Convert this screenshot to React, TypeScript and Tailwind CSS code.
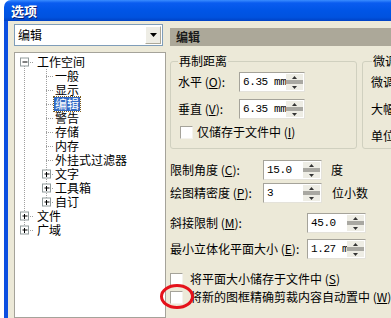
import React from "react";

type TreeRow = { label: string; level: 0 | 1; expander?: "plus" | "minus"; selected?: boolean };

const treeRows: TreeRow[] = [
  { label: "工作空间", level: 0, expander: "minus" },
  { label: "一般", level: 1 },
  { label: "显示", level: 1 },
  { label: "编辑", level: 1, selected: true },
  { label: "警告", level: 1 },
  { label: "存储", level: 1 },
  { label: "内存", level: 1 },
  { label: "外挂式过滤器", level: 1 },
  { label: "文字", level: 1, expander: "plus" },
  { label: "工具箱", level: 1, expander: "plus" },
  { label: "自订", level: 1, expander: "plus" },
  { label: "文件", level: 0, expander: "plus" },
  { label: "广域", level: 0, expander: "plus" },
];

function Mnemonic({ text, k }: { text: string; k: string }) {
  return (
    <span className="whitespace-nowrap">
      {text} (<span className="underline">{k}</span>):
    </span>
  );
}

function Spinner() {
  return (
    <div className="flex flex-col w-[17px] h-full">
      <div className="flex-1 bg-[#eeede5] flex items-center justify-center">
        <svg width="5" height="3" viewBox="0 0 5 3">
          <path d="M2.5 0 L5 3 L0 3 Z" fill="#333" />
        </svg>
      </div>
      <div className="h-[4px] bg-[#a9a8a2]" />
      <div className="flex-1 bg-[#eeede5] flex items-center justify-center">
        <svg width="5" height="3" viewBox="0 0 5 3">
          <path d="M0 0 L5 0 L2.5 3 Z" fill="#333" />
        </svg>
      </div>
    </div>
  );
}

function NumberBox({ value, width }: { value: string; width: string }) {
  return (
    <div
      className={`${width} h-[20px] flex bg-white border border-t-[#a5a39a] border-l-[#a5a39a] border-b-[#e4e2da] border-r-[#e4e2da] p-[1px]`}
    >
      <div className="flex-1 overflow-hidden whitespace-nowrap pl-[2px] font-['Liberation_Mono',monospace] text-[11px] leading-[16px] tracking-[-0.4px]">
        {value}
      </div>
      <Spinner />
    </div>
  );
}

function CheckBox() {
  return (
    <div className="w-[13px] h-[13px] bg-white border border-t-[#a5a39a] border-l-[#a5a39a] border-b-[#f4f3ee] border-r-[#f4f3ee] shrink-0" />
  );
}

function TreeLines() {
  const cy = (i: number) => 9 + 14 * i;
  const box = (x: number, y: number, plus: boolean, key: string) => (
    <g key={key}>
      <rect x={x - 4.5} y={y - 4.5} width={8} height={8} fill="#fff" stroke="#919b9c" />
      <path d={`M${x - 2.5} ${y - 0.5} H${x + 2.5}`} stroke="#000" />
      {plus && <path d={`M${x - 0.5} ${y - 2.5} V${y + 2.5}`} stroke="#000" />}
    </g>
  );
  return (
    <svg className="absolute left-0 top-0" width="150" height="260">
      <g stroke="#a0a0a0" strokeDasharray="1 1" fill="none">
        <path d={`M9.5 ${cy(0)} V${cy(12)}`} />
        <path d={`M31.5 16 V${cy(10)}`} />
        {[0, 11, 12].map((i) => (
          <path key={`h${i}`} d={`M9 ${cy(i) + 0.5} H19`} />
        ))}
        {[1, 2, 3, 4, 5, 6, 7, 8, 9, 10].map((i) => (
          <path key={`c${i}`} d={`M31 ${cy(i) + 0.5} H39`} />
        ))}
      </g>
      {box(9.5 + 0.5, cy(0) + 0.5, false, "b0")}
      {box(31.5 + 0.5, cy(8) + 0.5, true, "b8")}
      {box(31.5 + 0.5, cy(9) + 0.5, true, "b9")}
      {box(31.5 + 0.5, cy(10) + 0.5, true, "b10")}
      {box(9.5 + 0.5, cy(11) + 0.5, true, "b11")}
      {box(9.5 + 0.5, cy(12) + 0.5, true, "b12")}
    </svg>
  );
}

export default function App() {
  return (
    <div className="w-[391px] h-[318px] overflow-hidden bg-white relative font-['Noto_Sans_CJK_SC','Noto_Sans',sans-serif] text-[12px] leading-[14px] text-black">
      <div className="ml-[4px] w-[480px] flex flex-col">
        <div className="h-[21px] rounded-tl-[7px] bg-[linear-gradient(180deg,#3a8dff_0%,#0a5cf0_14%,#0055e6_50%,#0052df_82%,#0042c4_100%)] pl-[7px] flex items-center text-white font-bold text-[13px] [text-shadow:1px_1px_0_#0a1e6e]">
          选项
        </div>

        <div className="flex h-[297px] bg-[#ece9d8] border-l-4 border-[#0c4fe0] pl-[6px]">
          {/* left column */}
          <div className="w-[152px] flex flex-col pt-[3px]">
            <div className="w-[149px] h-[22px] bg-white border border-[#7f9db9] flex items-center">
              <span className="flex-1 pl-[3px]">编辑</span>
              <div className="w-[16px] h-[18px] mr-[1px] bg-[#eeede5] border border-t-white border-l-white border-b-[#aca899] border-r-[#aca899] flex items-center justify-center">
                <svg width="7" height="4" viewBox="0 0 7 4">
                  <path d="M0 0 H7 L3.5 4 Z" fill="#000" />
                </svg>
              </div>
            </div>
            <div className="mt-[6px] flex-1 bg-white border border-[#a5a39a] relative pt-[2px]">
              <TreeLines />
              {treeRows.map((r) => (
                <div
                  key={r.label}
                  className={`h-[14px] flex items-center relative ${r.level === 0 ? "pl-[22px]" : "pl-[40px]"}`}
                >
                  <span
                    className={
                      r.selected
                        ? "bg-[#316ac5] text-white px-[1px] -ml-[1px] outline outline-1 outline-dotted outline-[#7a5a1a]"
                        : ""
                    }
                  >
                    {r.label}
                  </span>
                </div>
              ))}
            </div>
          </div>

          {/* right column */}
          <div className="ml-[4px] flex-1 flex flex-col pt-[7px]">
            <div className="h-[18px] bg-[#aca899] flex items-center pl-[6px] font-bold text-[#1a1a1a]">编辑</div>

            <div className="flex mt-[8px]">
              <fieldset className="w-[187px] h-[95px] border border-[#d0d0bf] rounded-[3px]">
                <legend className="ml-[7px] px-[1px] leading-[14px]">再制距离</legend>
                <div className="flex items-center h-[20px] mt-[4px] pl-[7px]">
                  <div className="w-[61px]">
                    <Mnemonic text="水平" k="O" />
                  </div>
                  <NumberBox value="6.35 mm" width="w-[66px]" />
                </div>
                <div className="flex items-center h-[20px] mt-[7px] pl-[7px]">
                  <div className="w-[61px]">
                    <Mnemonic text="垂直" k="V" />
                  </div>
                  <NumberBox value="6.35 mm" width="w-[66px]" />
                </div>
                <div className="flex items-center h-[14px] mt-[6px] pl-[9px] gap-[4px]">
                  <CheckBox />
                  <span className="whitespace-nowrap">
                    仅储存于文件中 (<span className="underline">I</span>)
                  </span>
                </div>
              </fieldset>

              <fieldset className="ml-[5px] w-[120px] h-[95px] border border-[#d0d0bf] rounded-[3px]">
                <legend className="ml-[9px] px-[1px] leading-[14px]">微调</legend>
                <div className="pl-[8px] mt-[7px] flex flex-col gap-[13px]">
                  <span>微调</span>
                  <span>大幅</span>
                  <span>单位</span>
                </div>
              </fieldset>
            </div>

            <div className="flex items-center h-[20px] mt-[11px]">
              <div className="w-[93px]">
                <Mnemonic text="限制角度" k="C" />
              </div>
              <NumberBox value="15.0" width="w-[59px]" />
              <span className="ml-[9px]">度</span>
            </div>
            <div className="flex items-center h-[20px] mt-[3px]">
              <div className="w-[93px]">
                <Mnemonic text="绘图精密度" k="P" />
              </div>
              <NumberBox value="3" width="w-[59px]" />
              <span className="ml-[10px]">位小数</span>
            </div>
            <div className="flex items-center h-[20px] mt-[10px]">
              <div className="w-[137px]">
                <Mnemonic text="斜接限制" k="M" />
              </div>
              <NumberBox value="45.0" width="w-[59px]" />
            </div>
            <div className="flex items-center h-[20px] mt-[6px]">
              <div className="w-[137px]">
                <Mnemonic text="最小立体化平面大小" k="E" />
              </div>
              <NumberBox value="1.27 mm" width="w-[59px]" />
            </div>

            <div className="flex items-center h-[14px] mt-[13px] gap-[7px]">
              <CheckBox />
              <span className="whitespace-nowrap">
                将平面大小储存于文件中 (<span className="underline">S</span>)
              </span>
            </div>
            <div className="flex items-center h-[14px] mt-[4px] gap-[7px]">
              <CheckBox />
              <span className="whitespace-nowrap">
                将新的图框精确剪裁内容自动置中 (<span className="underline">W</span>)
              </span>
            </div>
          </div>
        </div>
      </div>

      {/* annotation */}
      <svg className="absolute left-[159px] top-[283px]" width="36" height="27" viewBox="0 0 36 27">
        <ellipse cx="18" cy="13.5" rx="15.5" ry="11" fill="none" stroke="#e5121b" strokeWidth="3" />
      </svg>
    </div>
  );
}
